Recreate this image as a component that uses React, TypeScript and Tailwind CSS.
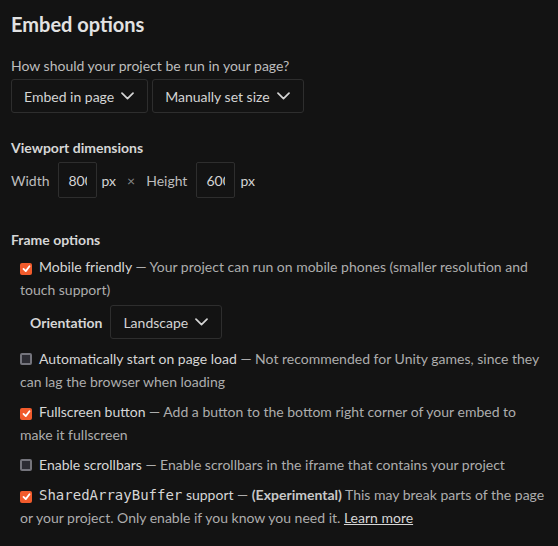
import type { ReactNode } from 'react';

const Chevron = () => (
    <svg width="13" height="8" viewBox="0 0 13 8" fill="none" stroke="currentColor" strokeWidth="1.7" strokeLinecap="round" strokeLinejoin="round" className="shrink-0">
        <polyline points="1 1.2 6.5 6.6 12 1.2" />
    </svg>
);

const Select = ({ label }: { label: string }) => (
    <div className="flex items-center h-[34px] pl-3 pr-[13px] gap-[7px] rounded-[3px] border border-[#2e2e2e] text-[#d4d4d4] text-[14px] whitespace-nowrap">
        <span>{label}</span>
        <Chevron />
    </div>
);

const Checkbox = ({ checked }: { checked: boolean }) =>
    checked ? (
        <span className="inline-flex items-center justify-center w-[12px] h-[12px] rounded-[2px] bg-[#f15b2c] align-[-1px] mr-[7px]">
            <svg width="9" height="9" viewBox="0 0 12 12" fill="none" stroke="white" strokeWidth="2.4" strokeLinecap="round" strokeLinejoin="round">
                <polyline points="2 6.5 5 9.5 10 3" />
            </svg>
        </span>
    ) : (
        <span className="inline-block w-[12px] h-[12px] rounded-[2px] bg-[#2c2c33] border-2 border-[#74747c] align-[-1px] mr-[7px]" />
    );

const Option = ({ checked, label, children }: { checked: boolean; label: ReactNode; children: ReactNode }) => (
    <div className="ml-[9px] text-[14px] leading-[23px] text-[#adadad]">
        <Checkbox checked={checked} />
        <span className="text-[#d6d6d6]">{label}</span> — {children}
    </div>
);

const DimInput = ({ value }: { value: string }) => (
    <input
        readOnly
        value={value}
        className="w-[39px] h-[36px] px-[9px] rounded-[2px] border border-[#2e2e2e] bg-transparent text-[#d4d4d4] text-[14px] outline-none font-['Lato',sans-serif]"
    />
);

export default function App() {
    return (
        <div className="min-h-[546px] bg-[#131313] pl-[11px] pr-[10px] pt-[12px] font-['Lato',sans-serif] text-[#bdbdbd]">
            <h2 className="text-[20px] leading-[24px] font-bold text-[#e2e2e2]">Embed options</h2>

            <p className="mt-[20px] text-[14px] leading-[20px]">How should your project be run in your page?</p>
            <div className="mt-[3px] flex gap-[4px]">
                <Select label="Embed in page" />
                <Select label="Manually set size" />
            </div>

            <h3 className="mt-[25px] text-[14px] leading-[20px] font-bold text-[#d6d6d6]">Viewport dimensions</h3>
            <div className="mt-[4px] flex items-center text-[14px]">
                <span className="mr-[9px]">Width</span>
                <DimInput value="800" />
                <span className="ml-[4px] text-[#d4d4d4]">px</span>
                <span className="ml-[11px] text-[#8a8a8a]">×</span>
                <span className="ml-[11px]">Height</span>
                <span className="ml-[9px]">
                    <DimInput value="600" />
                </span>
                <span className="ml-[5px] text-[#d4d4d4]">px</span>
            </div>

            <h3 className="mt-[32px] text-[14px] leading-[20px] font-bold text-[#d6d6d6]">Frame options</h3>
            <div className="mt-[5px] flex flex-col gap-[7px]">
                <div className="pb-[1px]">
                    <Option checked label="Mobile friendly">
                        Your project can run on mobile phones (smaller resolution and touch support)
                    </Option>
                    <div className="mt-[4px] ml-[19px] flex items-center gap-[8px]">
                        <span className="text-[14px] font-bold text-[#d6d6d6]">Orientation</span>
                        <Select label="Landscape" />
                    </div>
                </div>
                <Option checked={false} label="Automatically start on page load">
                    Not recommended for Unity games, since they can lag the browser when loading
                </Option>
                <Option checked label="Fullscreen button">
                    Add a button to the bottom right corner of your embed to make it fullscreen
                </Option>
                <Option checked={false} label="Enable scrollbars">
                    Enable scrollbars in the iframe that contains your project
                </Option>
                <Option
                    checked
                    label={
                        <>
                            <span className="font-['DejaVu_Sans_Mono','Liberation_Mono',monospace] text-[14px] leading-none">SharedArrayBuffer</span> support
                        </>
                    }
                >
                    <strong className="font-bold text-[#c8c8c8]">(Experimental)</strong> This may break parts of the page or your
                    project. Only enable if you know you need it.{' '}
                    <a className="underline text-[#d6d6d6]">Learn more</a>
                </Option>
            </div>
        </div>
    );
}
